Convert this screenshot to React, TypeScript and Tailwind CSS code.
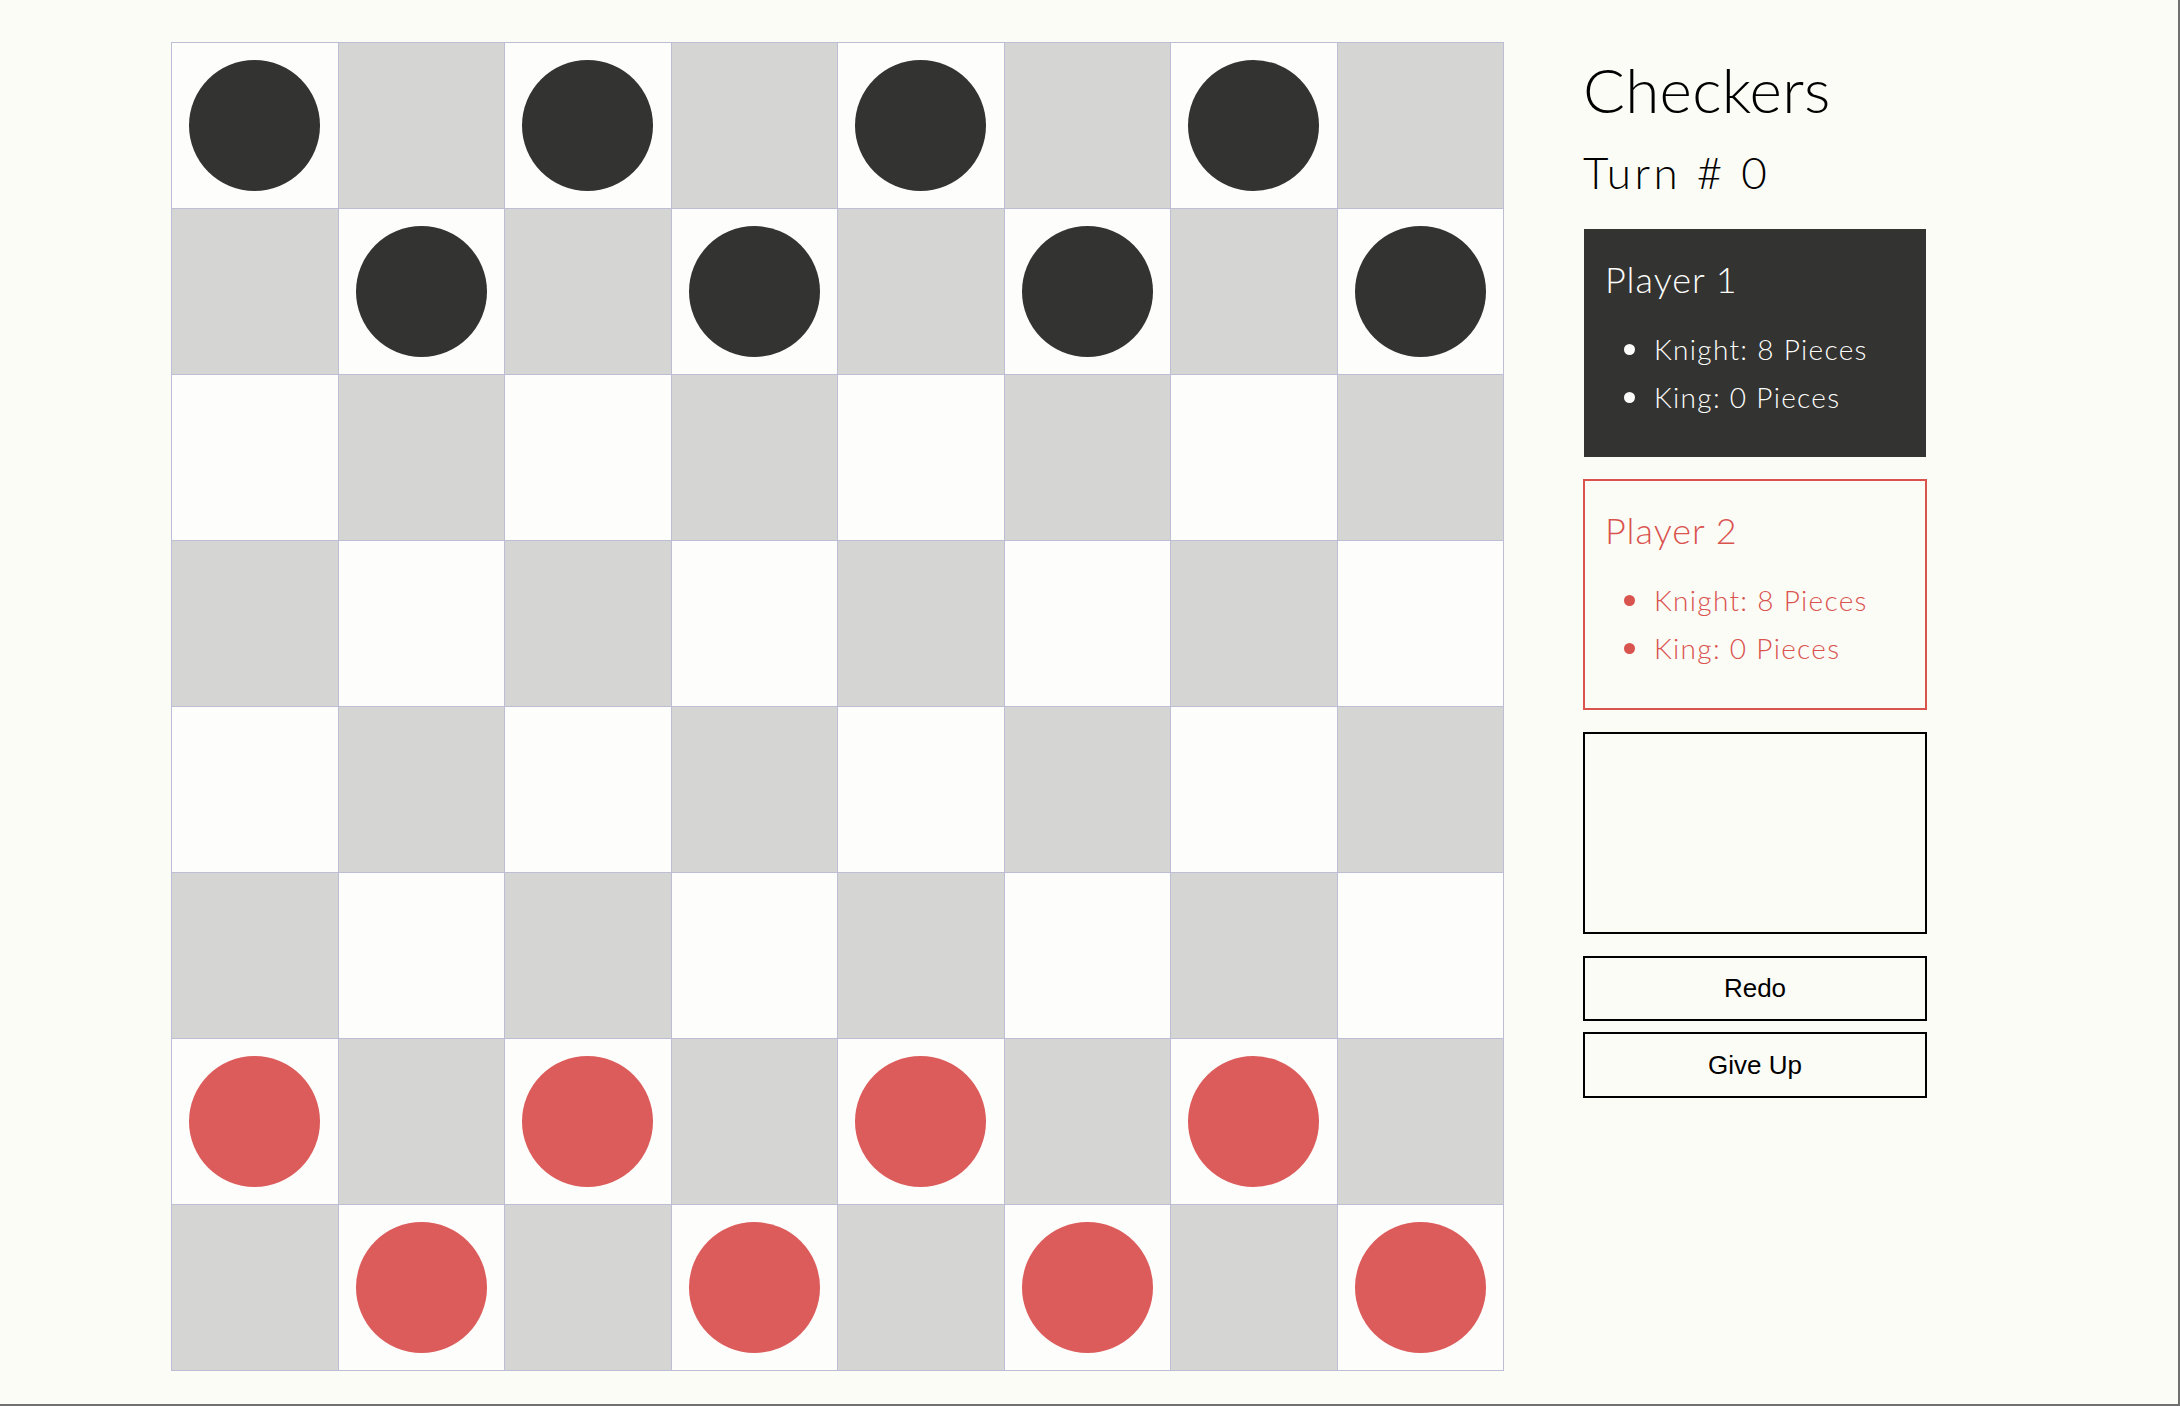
const rows = [0, 1, 2, 3, 4, 5, 6, 7];
const cols = [0, 1, 2, 3, 4, 5, 6, 7];

const pieceAt = (r: number, c: number) => {
  if ((r + c) % 2 !== 0) return null;
  if (r < 2) return "dark";
  if (r > 5) return "red";
  return null;
};

const Board = () => {
  return (
    <div className="grid grid-cols-8 w-[1333px] border-l border-t border-[#bdbdd6] shrink-0">
      {rows.map((r) =>
        cols.map((c) => {
          const light = (r + c) % 2 === 0;
          const piece = pieceAt(r, c);
          return (
            <div
              key={`${r}-${c}`}
              className={`h-[166px] border-r border-b border-[#bdbdd6] flex items-center justify-center ${
                light ? "bg-[#fdfdfb]" : "bg-[#d5d5d3]"
              }`}
            >
              {piece === "dark" && (
                <div className="w-[131px] h-[131px] rounded-full bg-[#333331]" />
              )}
              {piece === "red" && (
                <div className="w-[131px] h-[131px] rounded-full bg-[#dc5b5b]" />
              )}
            </div>
          );
        })
      )}
    </div>
  );
};

const PlayerCard = ({ name, dark }: { name: string; dark?: boolean }) => {
  return (
    <div
      className={
        dark
          ? "bg-[#333331] text-[#fdfdfb] pt-[32px] pb-[36px] px-[21px] mx-[1px]"
          : "border-2 border-[#d9534f] text-[#d9534f] pt-[31px] pb-[36px] px-[20px]"
      }
    >
      <h2 className="text-[36px] leading-[36px] font-light tracking-[1px]">{name}</h2>
      <ul className="mt-[28px] text-[28px] leading-[48px] font-light tracking-[1.3px]">
        <li className="flex items-center">
          <span className={`w-[11px] h-[11px] rounded-full ml-[19px] mr-[19px] ${dark ? "bg-[#fdfdfb]" : "bg-[#d9534f]"}`} />
          Knight: 8 Pieces
        </li>
        <li className="flex items-center">
          <span className={`w-[11px] h-[11px] rounded-full ml-[19px] mr-[19px] ${dark ? "bg-[#fdfdfb]" : "bg-[#d9534f]"}`} />
          King: 0 Pieces
        </li>
      </ul>
    </div>
  );
};

export default function App() {
  return (
    <div className="w-[2180px] h-[1406px] bg-[#fcfcf6] border-r-2 border-b-2 border-[#707070] overflow-hidden font-['Lato',sans-serif]">
      <div className="flex pl-[171px] pt-[42px] gap-[79px]">
        <Board />

        {/* Side panel */}
        <div className="w-[344px] flex flex-col pt-[16px]">
          <h1 className="text-[62px] leading-[62px] text-black font-light tracking-[0.3px]">Checkers</h1>
          <div className="mt-[30px] text-[44px] leading-[44px] text-black font-light tracking-[3.5px]">Turn # 0</div>

          <div className="mt-[35px] flex flex-col gap-[22px]">
            <PlayerCard name="Player 1" dark />
            <PlayerCard name="Player 2" />
            <div className="h-[202px] border-2 border-black" />
          </div>

          <div className="mt-[22px] flex flex-col gap-[11px] font-['Liberation_Sans',Arial,sans-serif]">
            <button className="h-[65px] border-2 border-black text-[26px] text-black bg-transparent">
              Redo
            </button>
            <button className="h-[66px] border-2 border-black text-[26px] text-black bg-transparent">
              Give Up
            </button>
          </div>
        </div>
      </div>
    </div>
  );
}
